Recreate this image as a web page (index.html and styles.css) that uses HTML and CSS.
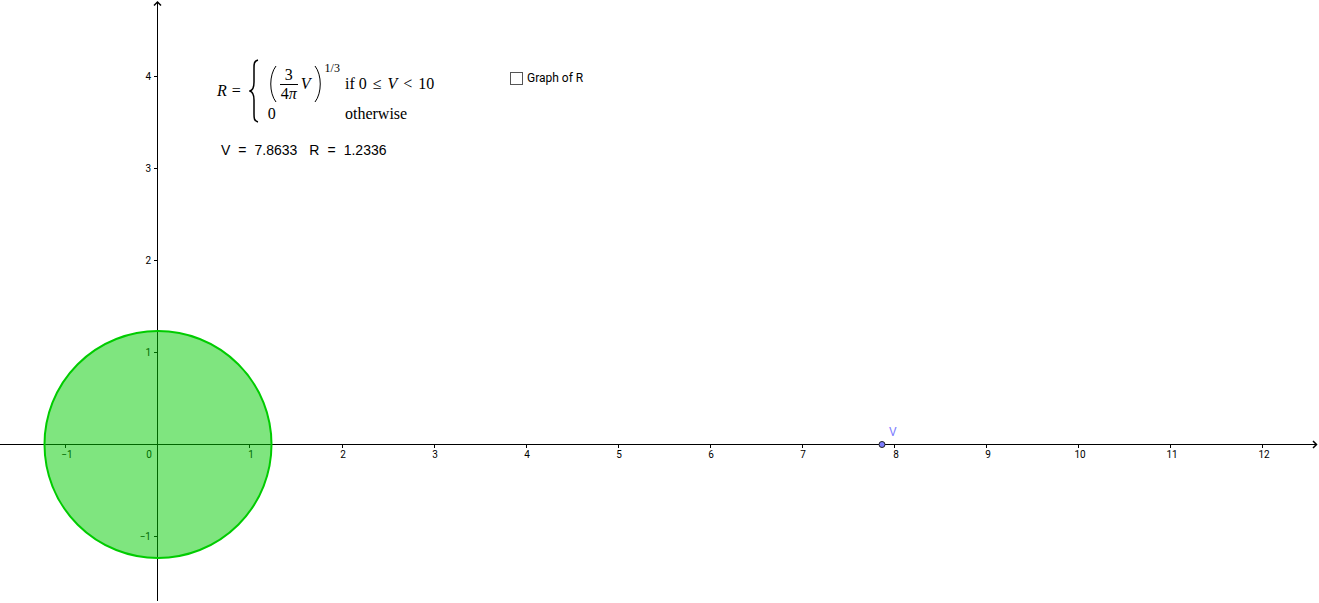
FILE: index.html
```html
<!DOCTYPE html>
<html lang="en">
<head>
    <meta charset="UTF-8">
    <title>Radius of a sphere</title>
    <link rel="stylesheet" href="styles.css">
</head>
<body>
    <main class="board">
        <svg class="graph" role="img" aria-label="Circle of radius R and point V on the x axis">
            <!-- x axis -->
            <line class="axis" x1="0" y1="444.5" x2="100%" y2="444.5"/>
            <svg x="100%" y="444" overflow="visible">
                <path class="arrow" d="M-4 -3 L-0.5 0.5 L-4 4"/>
            </svg>
            <path class="axis" d="M65.5 445v3M249.5 445v3M342.5 445v3M434.5 445v3M526.5 445v3M618.5 445v3M710.5 445v3M802.5 445v3M894.5 445v3M986.5 445v3M1078.5 445v3M1170.5 445v3M1262.5 445v3"/>
            <g class="x-labels">
                <text x="67" y="458">−1</text>
                <text x="149" y="458">0</text>
                <text x="251" y="458">1</text>
                <text x="343" y="458">2</text>
                <text x="435" y="458">3</text>
                <text x="527" y="458">4</text>
                <text x="619" y="458">5</text>
                <text x="711" y="458">6</text>
                <text x="803" y="458">7</text>
                <text x="896" y="458">8</text>
                <text x="988" y="458">9</text>
                <text x="1080" y="458">10</text>
                <text x="1172" y="458">11</text>
                <text x="1264" y="458">12</text>
            </g>

            <!-- y axis -->
            <line class="axis" x1="157.5" y1="2" x2="157.5" y2="100%"/>
            <path class="arrow" d="M154 5.5 L157.5 2 L161 5.5"/>
            <path class="axis" d="M154 76.5h3M154 168.5h3M154 260.5h3M154 352.5h3M154 536.5h3"/>
            <g class="y-labels">
                <text x="151" y="80">4</text>
                <text x="151" y="172">3</text>
                <text x="151" y="264">2</text>
                <text x="151" y="356">1</text>
                <text x="151" y="540">−1</text>
            </g>

            <circle class="disc" cx="158" cy="444.5" r="113.5"/>

            <circle class="point" cx="882" cy="444.5" r="3"/>
            <text class="point-label" x="889" y="436">V</text>
        </svg>

        <div class="formula">
            <i>R</i>
            <span class="equals">=</span>
            <svg class="brace" viewBox="0 0 10 64">
                <path d="M9 1C5 2 5 5 5 9V23C5 28 4 31 1 32C4 33 5 36 5 41V55C5 59 5 62 9 63"/>
            </svg>
            <div class="cases">
                <div class="power">
                    <svg class="paren" viewBox="0 0 8 38"><path d="M7 1C0 10 0 28 7 37"/></svg>
                    <span class="fraction"><span class="top">3</span><span>4<i>π</i></span></span>
                    <i>V</i>
                    <svg class="paren" viewBox="0 0 8 38"><path d="M1 1C8 10 8 28 1 37"/></svg>
                    <span class="exponent">1/3</span>
                </div>
                <span class="condition">if 0 <span class="relation">≤</span> <i>V</i> <span class="relation">&lt;</span> 10</span>
                <span>0</span>
                <span>otherwise</span>
            </div>
        </div>

        <div class="values">
            <span class="value"><span>V</span><span>=</span><span>7.8633</span></span>
            <span class="value"><span>R</span><span>=</span><span>1.2336</span></span>
        </div>

        <label class="toggle">
            <input type="checkbox">
            Graph of R
        </label>
    </main>
</body>
</html>
```

FILE: styles.css
```css
body {
    margin: 0;
    background: #fff;
    color: #000;
    font-family: Roboto, sans-serif;
}
.board {
    position: relative;
    height: 100vh;
    overflow: hidden;
}
.graph {
    display: block;
    width: calc(100% - 2px);
    height: calc(100% - 2px);
    overflow: visible;
}
.axis {
    stroke: #000;
    stroke-width: 1px;
    shape-rendering: crispEdges;
}
.arrow {
    fill: none;
    stroke: #000;
    stroke-width: 1.5px;
}
.x-labels,
.y-labels {
    font-size: 10px;
}
.x-labels {
    text-anchor: middle;
}
.y-labels {
    text-anchor: end;
}
.disc {
    fill: #00cc00;
    fill-opacity: 0.5;
    stroke: #00cc00;
    stroke-width: 2px;
}
.point {
    fill: #7d7dff;
    stroke: #222;
    stroke-width: 1px;
}
.point-label {
    fill: #7d7dff;
    font-size: 12px;
}

/* objects placed on the canvas */
.formula,
.values,
.toggle {
    position: absolute;
    display: flex;
    align-items: center;
}
.formula {
    left: 217px;
    top: 59px;
    font: 16px/18px "Liberation Serif", serif;
}
.equals {
    margin: 0 8px 0 5px;
}
.formula svg {
    fill: none;
    stroke: #000;
}
.brace {
    width: 10px;
    height: 64px;
    stroke-width: 1.5px;
}
.cases {
    display: grid;
    grid-template-columns: auto auto;
    column-gap: 5px;
    row-gap: 2px;
    margin: 6px 0 0 9px;
}
.power {
    display: flex;
    align-items: center;
    gap: 3px;
    padding-left: 1px;
}
.paren {
    width: 8px;
    height: 38px;
}
.fraction {
    display: flex;
    flex-direction: column;
    text-align: center;
}
.fraction span {
    padding: 0 1px;
}
.top {
    border-bottom: 1px solid #000;
}
.exponent {
    align-self: flex-start;
    font-size: 12px;
    line-height: 6px;
}
.condition {
    align-self: center;
}
.relation {
    margin: 0 2px;
}
.values {
    left: 221px;
    top: 141px;
    gap: 12px;
    font: 14px/18px "Liberation Sans", sans-serif;
}
.value {
    display: flex;
    gap: 8px;
}
.toggle {
    left: 510px;
    top: 70px;
    gap: 4px;
    font-size: 12px;
    line-height: 16px;
}
.toggle input {
    appearance: none;
    width: 13px;
    height: 13px;
    margin: 0;
    border: 1px solid #555;
    background: #fff;
}
.toggle input:checked {
    background: #555;
}
```
